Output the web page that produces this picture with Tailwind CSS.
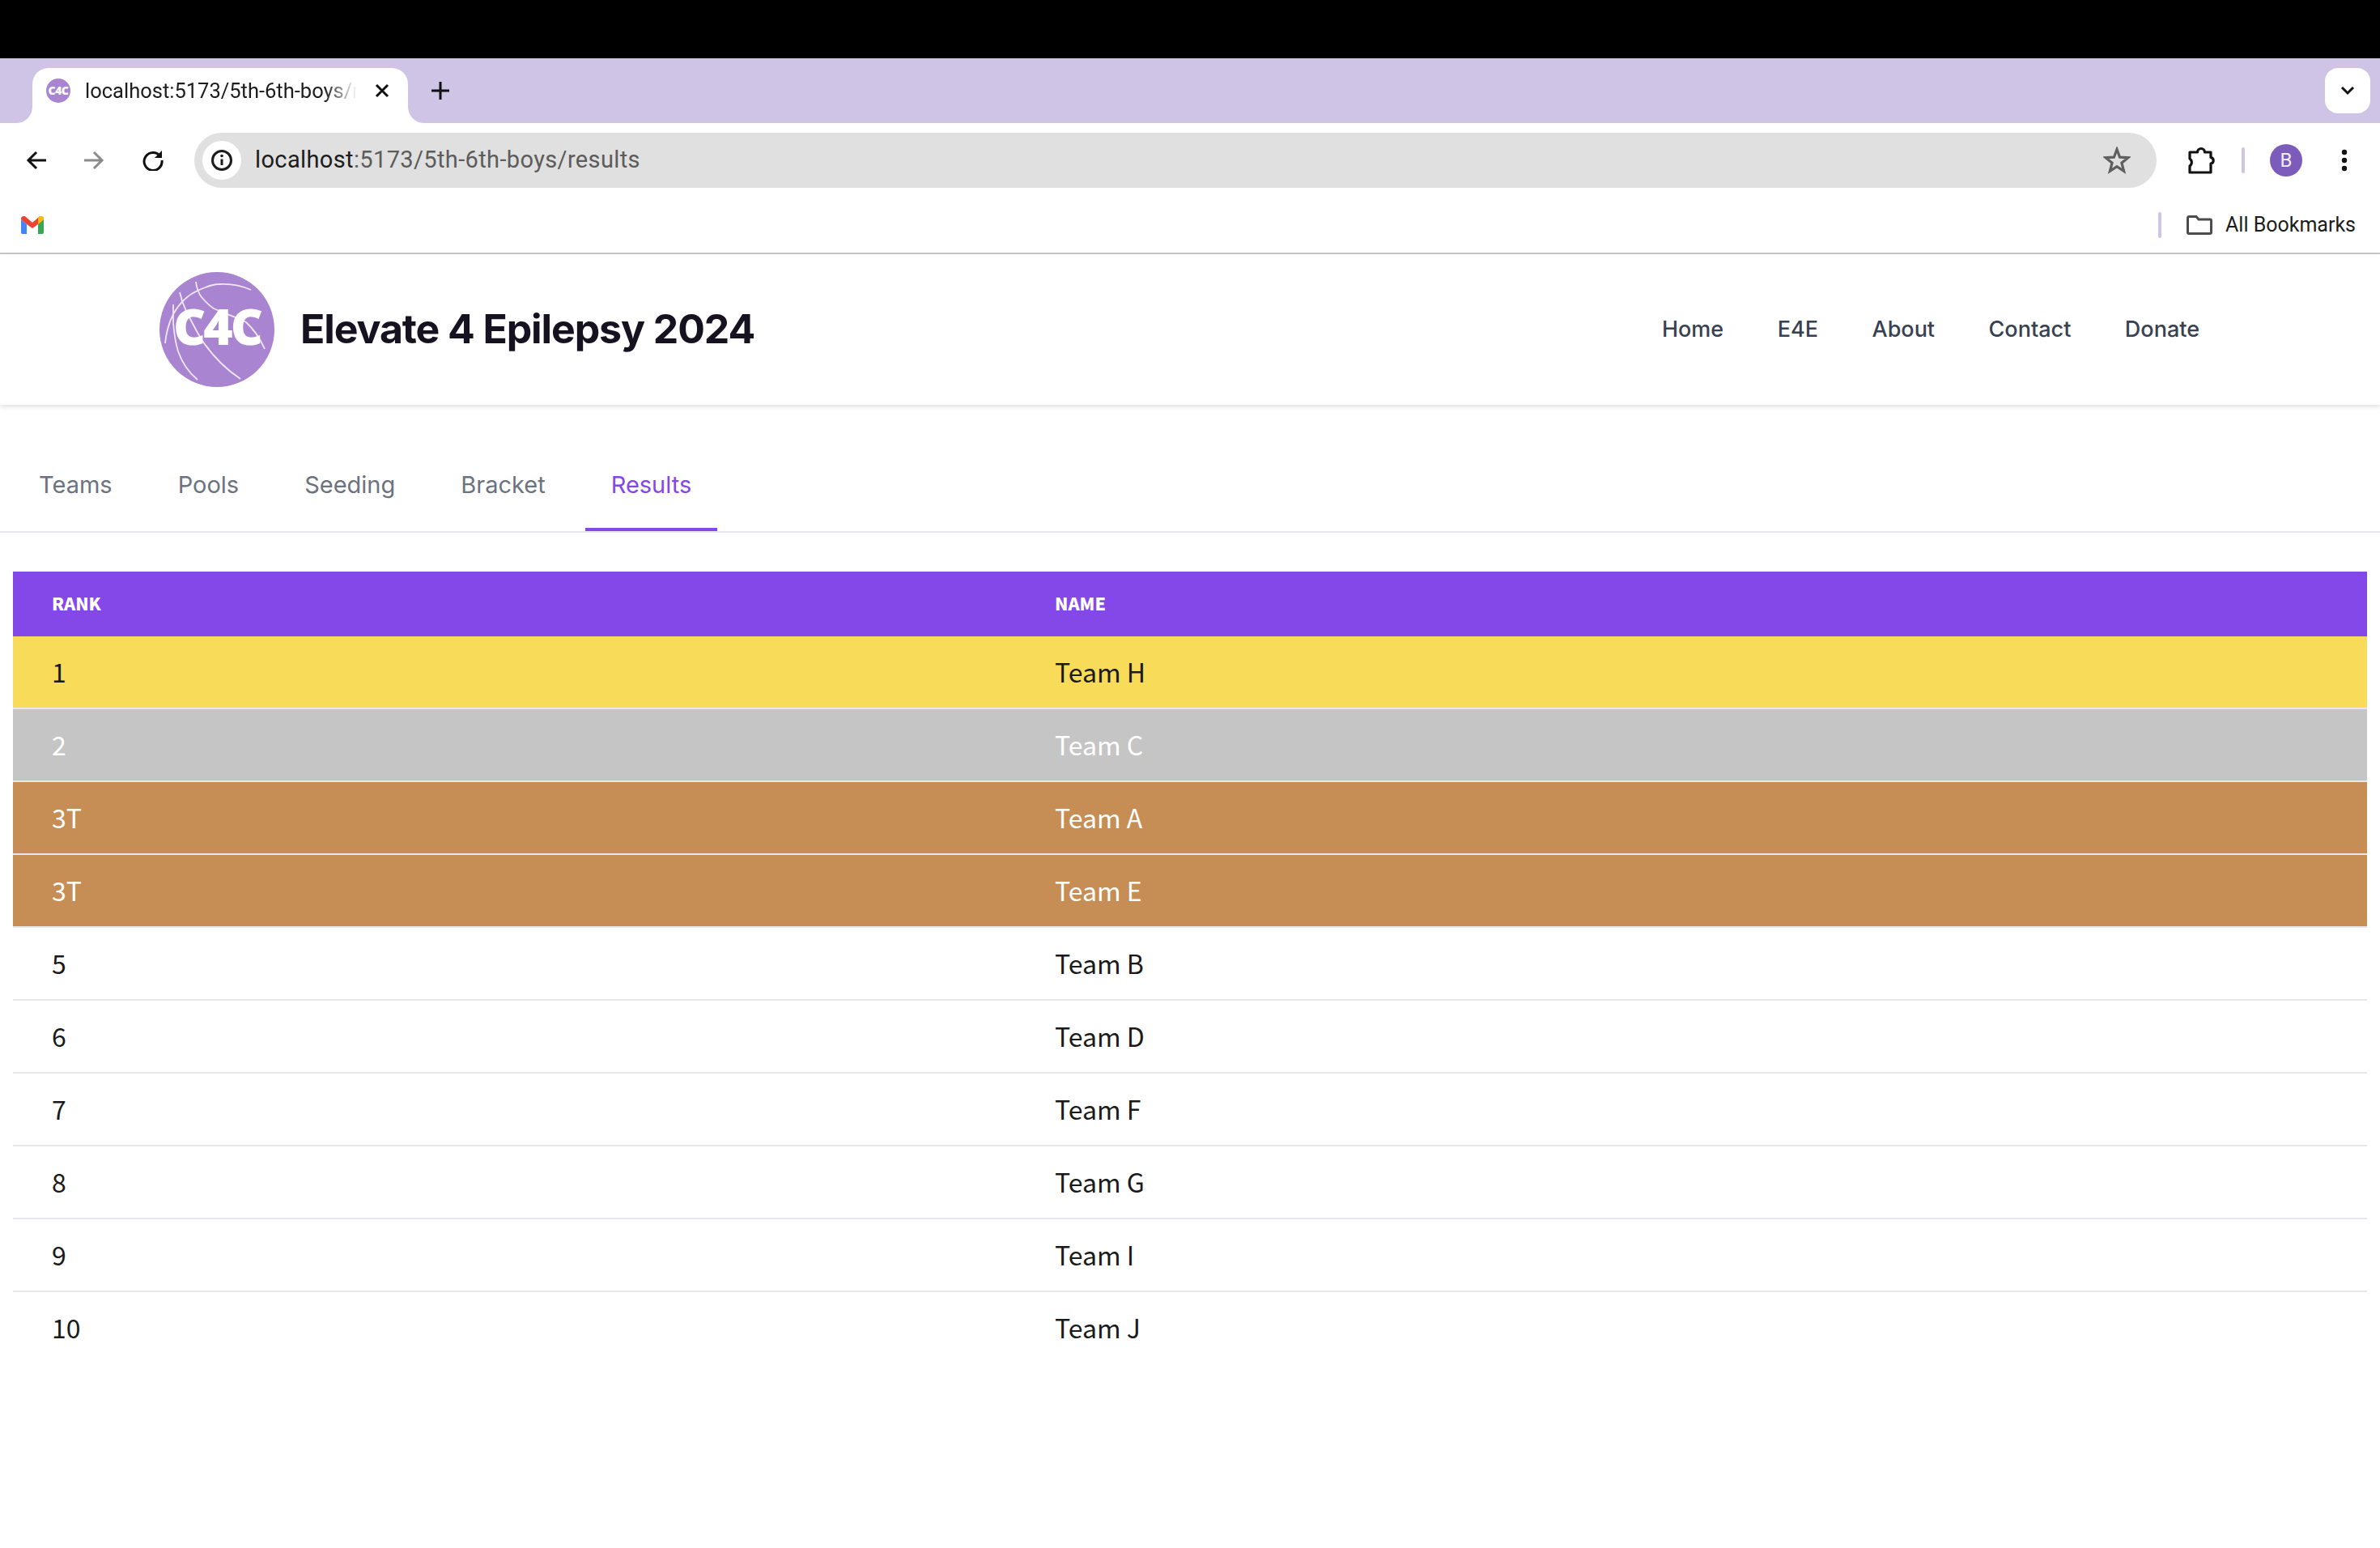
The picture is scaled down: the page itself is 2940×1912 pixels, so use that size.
<!DOCTYPE html>
<html>
<head>
<meta charset="utf-8">
<script src="https://cdn.jsdelivr.net/npm/@tailwindcss/browser@4"></script>
</head>
<body class="bg-white">
<div class="w-[2940px] h-[1912px] flex flex-col overflow-hidden bg-white font-['Inter',sans-serif]">
  <div class="h-[72px] bg-black shrink-0"></div>
  <!-- tab strip -->
  <div class="h-[80px] bg-[#cfc4e6] shrink-0 flex items-start pt-[12px] pl-[40px] pr-[12px] relative">
    <div class="relative w-[464px] h-[68px] bg-white rounded-t-[20px] flex items-center pl-[17px] pb-[12px]">
      <svg class="absolute left-[-20px] bottom-0 w-[20px] h-[20px]" viewBox="0 0 20 20"><path d="M20 0V20H0A20 20 0 0 0 20 0Z" fill="#fff"/></svg>
      <svg class="absolute right-[-20px] bottom-0 w-[20px] h-[20px]" viewBox="0 0 20 20"><path d="M0 0V20H20A20 20 0 0 1 0 0Z" fill="#fff"/></svg>
      <svg class="w-[30px] h-[30px] shrink-0" viewBox="0 0 30 30"><circle cx="15" cy="15" r="15" fill="#a985d1"/><text x="15" y="20" text-anchor="middle" font-family="Noto Sans" font-weight="900" font-size="14" fill="#fff" letter-spacing="-0.5">C4C</text></svg>
      <div class="ml-[18px] w-[336px] overflow-hidden whitespace-nowrap text-[25.5px] text-[#1c1c1c] font-['Roboto',sans-serif] [mask-image:linear-gradient(to_right,black_88%,transparent_100%)]">localhost:5173/5th-6th-boys/results</div>
      <svg class="absolute left-[422px] top-[18px] w-[20px] h-[20px]" viewBox="0 0 20 20"><path d="M3 3L17 17M17 3L3 17" stroke="#111" stroke-width="3"/></svg>
    </div>
    <svg class="ml-[28px] mt-[16px] w-[24px] h-[24px]" viewBox="0 0 24 24"><path d="M12 1V23M1 12H23" stroke="#111" stroke-width="3"/></svg>
    <div class="ml-auto w-[56px] h-[56px] bg-white rounded-[16px] flex items-center justify-center">
      <svg class="w-[18px] h-[12px]" viewBox="0 0 18 12"><path d="M2 2L9 9L16 2" fill="none" stroke="#111" stroke-width="3"/></svg>
    </div>
  </div>
  <!-- toolbar -->
  <div class="h-[88px] shrink-0 flex items-center bg-white rounded-t-[16px] pt-[4px] pl-[32px] pr-[28px] relative">
    <svg class="w-[26px] h-[24px]" viewBox="0 0 26 24"><path d="M25 12H3M13 2L3 12L13 22" fill="none" stroke="#111" stroke-width="3"/></svg>
    <svg class="ml-[45px] w-[26px] h-[24px]" viewBox="0 0 26 24"><path d="M1 12H23M13 2L23 12L13 22" fill="none" stroke="#8a8a8a" stroke-width="3"/></svg>
    <svg class="ml-[47px] w-[26px] h-[26px]" viewBox="0 0 26 26"><path d="M22 8A11 11 0 1 0 24 13" fill="none" stroke="#111" stroke-width="3"/><path d="M24 1V10H15" fill="#111"/></svg>
    <div class="ml-[38px] w-[2424px] h-[68px] rounded-full bg-[#e0e0e0] flex items-center pl-[10px] pr-[32px]">
      <div class="w-[48px] h-[48px] rounded-full bg-white flex items-center justify-center shrink-0">
        <svg class="w-[28px] h-[28px]" viewBox="0 0 28 28"><circle cx="14" cy="14" r="11.5" fill="none" stroke="#1c1c1c" stroke-width="3"/><path d="M14 12.5V20" stroke="#1c1c1c" stroke-width="3"/><circle cx="14" cy="8.5" r="1.8" fill="#1c1c1c"/></svg>
      </div>
      <div class="ml-[17px] text-[29px] text-[#5c5c5c] font-['Roboto',sans-serif] tracking-[0.37px]"><span class="text-[#1c1c1c]">localhost</span>:5173/5th-6th-boys/results</div>
      <svg class="ml-auto w-[34px] h-[34px]" viewBox="0 0 34 34"><path d="M17 3.5L20.6 13.2L31 13.7L22.9 20.2L25.6 30.3L17 24.6L8.4 30.3L11.1 20.2L3 13.7L13.4 13.2Z" fill="none" stroke="#5f5f5f" stroke-width="3.2"/></svg>
    </div>
    <svg class="ml-[38px] w-[34px] h-[36px]" viewBox="0 0 34 36"><path d="M3 8H12.500A4.500 4.500 0 0 1 21.500 8H29V14.500A3.800 3.800 0 0 1 29 22V33H3V25A5.500 5.500 0 0 0 3 16Z" fill="none" stroke="#111" stroke-width="3.2" stroke-linejoin="round"/></svg>
    <div class="ml-[33px] w-[4px] h-[32px] bg-[#cfc4e6] rounded"></div>
    <div class="ml-[31px] w-[40px] h-[40px] rounded-full bg-[#7b5cbb] text-[#f1ecfa] text-[24px] flex items-center justify-center font-['Roboto',sans-serif]">B</div>
    <svg class="ml-[48px] w-[8px] h-[28px]" viewBox="0 0 8 28"><circle cx="4" cy="4" r="3.2" fill="#111"/><circle cx="4" cy="14" r="3.2" fill="#111"/><circle cx="4" cy="24" r="3.2" fill="#111"/></svg>
  </div>
  <!-- bookmarks -->
  <div class="h-[74px] shrink-0 flex items-center pl-[26px] pr-[30px] pt-[4px] border-b-[2px] border-[#c8c8c8]">
    <svg class="w-[28px] h-[22px]" viewBox="0 0 28 22"><path d="M0 4V20A2 2 0 0 0 2 22H7V10Z" fill="#4285f4"/><path d="M28 4V20A2 2 0 0 1 26 22H21V10Z" fill="#34a853"/><path d="M0 4A3.5 3.5 0 0 1 6 1L14 8L22 1A3.5 3.5 0 0 1 28 4L21 10L14 15L7 10Z" fill="#ea4335"/><path d="M21 3L22 1A3.5 3.5 0 0 1 28 4L21 10Z" fill="#fbbc04"/></svg>
    <div class="ml-auto w-[4px] h-[32px] bg-[#cfc4e6] rounded"></div>
    <svg class="ml-[31px] w-[32px] h-[24px]" viewBox="0 0 32 24"><path d="M1.5 3A1.5 1.5 0 0 1 3 1.500H12L15 5H29A1.500 1.500 0 0 1 30.500 6.500V21A1.500 1.500 0 0 1 29 22.500H3A1.500 1.500 0 0 1 1.500 21Z" fill="none" stroke="#4c4c4c" stroke-width="3"/></svg>
    <div class="ml-[16px] text-[25px] text-[#1c1c1c] font-['Roboto',sans-serif]">All Bookmarks</div>
  </div>
  <!-- site header -->
  <header class="h-[186px] shrink-0 flex items-center pl-[197px] pr-[223px] bg-white shadow-[0_2px_6px_rgba(0,0,0,0.14)] relative">
    <svg class="w-[142px] h-[142px] shrink-0" viewBox="0 0 142 142">
      <circle cx="71" cy="71" r="71" fill="#a985d1"/>
      <g fill="none" stroke="#efe6f8" stroke-width="1.800">
        <path d="M7 88C9 68 14 58 17 52C26 36 36 28 47 23C58 18 66 15 73 15C88 14 102 17 113 22"/>
        <path d="M45 12C46 20 48 26 52 31C58 38 62 42 67 45C82 52 96 56 107 62C118 72 125 84 130 95"/>
        <path d="M25 25C27 34 30 42 33 48C40 62 46 74 53 85C66 104 82 120 100 132"/>
        <path d="M17 40C17 50 17 56 17 62C18 76 20 88 23 98C28 112 36 124 47 133"/>
      </g>
      <text x="71" y="90" text-anchor="middle" font-family="Noto Sans" font-weight="900" font-size="62" fill="#fff" letter-spacing="-3">C4C</text>
    </svg>
    <div class="ml-[32px] mb-[2px] text-[50px] leading-none font-bold text-[#17121f] font-['Inter',sans-serif] tracking-[-1.1px]">Elevate 4 Epilepsy 2024</div>
    <nav class="ml-auto pt-[1px] flex items-center gap-[66.5px] text-[27px] font-medium text-[#374151]">
      <a>Home</a><a>E4E</a><a>About</a><a>Contact</a><a>Donate</a>
    </nav>
  </header>
  <!-- tabs -->
  <div class="mt-[44px] h-[114px] shrink-0 flex items-stretch border-b-[2px] border-[#e5e7eb] pl-[16px] gap-[17px] text-[29px] text-[#6b7280] font-['Inter',sans-serif]">
    <div class="px-[32px] pt-[2px] flex items-center border-b-[4px] border-transparent">Teams</div>
    <div class="px-[32px] pt-[2px] flex items-center border-b-[4px] border-transparent">Pools</div>
    <div class="px-[32px] pt-[2px] flex items-center border-b-[4px] border-transparent">Seeding</div>
    <div class="px-[32px] pt-[2px] flex items-center border-b-[4px] border-transparent">Bracket</div>
    <div class="px-[32px] pt-[2px] flex items-center border-b-[4px] border-[#8348e7] text-[#8348e7]">Results</div>
  </div>
  <!-- table -->
  <div class="mt-[48px] mx-[16px] font-['Noto_Sans_CJK_SC',sans-serif]">
    <div class="h-[80px] bg-[#8348e7] grid grid-cols-[1239px_1fr] items-center text-white text-[21.5px] font-black uppercase pb-[2px]">
      <div class="pl-[48px]">Rank</div><div class="pl-[48px]">Name</div>
    </div>
    <div class="h-[90px] pb-[2px] bg-[#f9db5a] border-b-[2px] border-[#e5e7eb] grid grid-cols-[1239px_1fr] items-center text-[32px] text-[#1a1a1a]"><div class="pl-[48px]">1</div><div class="pl-[48px]">Team H</div></div>
    <div class="h-[90px] pb-[2px] bg-[#c5c5c5] border-b-[2px] border-[#e5e7eb] grid grid-cols-[1239px_1fr] items-center text-[32px] text-white"><div class="pl-[48px]">2</div><div class="pl-[48px]">Team C</div></div>
    <div class="h-[90px] pb-[2px] bg-[#c68e54] border-b-[2px] border-[#e5e7eb] grid grid-cols-[1239px_1fr] items-center text-[32px] text-white"><div class="pl-[48px]">3T</div><div class="pl-[48px]">Team A</div></div>
    <div class="h-[90px] pb-[2px] bg-[#c68e54] border-b-[2px] border-[#e5e7eb] grid grid-cols-[1239px_1fr] items-center text-[32px] text-white"><div class="pl-[48px]">3T</div><div class="pl-[48px]">Team E</div></div>
    <div class="h-[90px] pb-[2px] border-b-[2px] border-[#e5e7eb] grid grid-cols-[1239px_1fr] items-center text-[32px] text-[#1a1a1a]"><div class="pl-[48px]">5</div><div class="pl-[48px]">Team B</div></div>
    <div class="h-[90px] pb-[2px] border-b-[2px] border-[#e5e7eb] grid grid-cols-[1239px_1fr] items-center text-[32px] text-[#1a1a1a]"><div class="pl-[48px]">6</div><div class="pl-[48px]">Team D</div></div>
    <div class="h-[90px] pb-[2px] border-b-[2px] border-[#e5e7eb] grid grid-cols-[1239px_1fr] items-center text-[32px] text-[#1a1a1a]"><div class="pl-[48px]">7</div><div class="pl-[48px]">Team F</div></div>
    <div class="h-[90px] pb-[2px] border-b-[2px] border-[#e5e7eb] grid grid-cols-[1239px_1fr] items-center text-[32px] text-[#1a1a1a]"><div class="pl-[48px]">8</div><div class="pl-[48px]">Team G</div></div>
    <div class="h-[90px] pb-[2px] border-b-[2px] border-[#e5e7eb] grid grid-cols-[1239px_1fr] items-center text-[32px] text-[#1a1a1a]"><div class="pl-[48px]">9</div><div class="pl-[48px]">Team I</div></div>
    <div class="h-[90px] pb-[4px] grid grid-cols-[1239px_1fr] items-center text-[32px] text-[#1a1a1a]"><div class="pl-[48px]">10</div><div class="pl-[48px]">Team J</div></div>
  </div>
</div>
</body>
</html>
